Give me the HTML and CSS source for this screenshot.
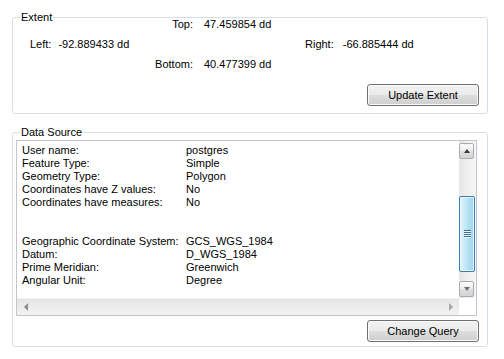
FILE: index.html
```html
<!DOCTYPE html>
<html>
<head>
<meta charset="utf-8">
<link rel="stylesheet" href="styles.css">
</head>
<body>
<div class="dialog">
  <section class="group group-extent">
    <span class="group-title">Extent</span>
    <div class="ext-row ext-center"><span class="ext-lbl">Top:</span><span class="ext-val">47.459854 dd</span></div>
    <div class="ext-row ext-sides">
      <div class="ext-pair ext-left"><span>Left:</span><span class="ext-val">-92.889433 dd</span></div>
      <div class="ext-pair ext-right"><span>Right:</span><span class="ext-val">-66.885444 dd</span></div>
    </div>
    <div class="ext-row ext-center"><span class="ext-lbl">Bottom:</span><span class="ext-val">40.477399 dd</span></div>
    <div class="actions"><button class="btn">Update Extent</button></div>
  </section>

  <section class="group group-source">
    <span class="group-title">Data Source</span>
    <div class="listbox">
      <div class="list-content">
        <div class="row"><span class="k">User name:</span><span>postgres</span></div>
        <div class="row"><span class="k">Feature Type:</span><span>Simple</span></div>
        <div class="row"><span class="k">Geometry Type:</span><span>Polygon</span></div>
        <div class="row"><span class="k">Coordinates have Z values:</span><span>No</span></div>
        <div class="row"><span class="k">Coordinates have measures:</span><span>No</span></div>
        <div class="row"></div>
        <div class="row"></div>
        <div class="row"><span class="k">Geographic Coordinate System:</span><span>GCS_WGS_1984</span></div>
        <div class="row"><span class="k">Datum:</span><span>D_WGS_1984</span></div>
        <div class="row"><span class="k">Prime Meridian:</span><span>Greenwich</span></div>
        <div class="row"><span class="k">Angular Unit:</span><span>Degree</span></div>
      </div>
      <div class="vscroll">
        <div class="sb-btn sb-up"><span class="tri-up"></span></div>
        <div class="sb-thumb"><span class="grip"></span></div>
        <div class="sb-btn sb-down"><span class="tri-down"></span></div>
      </div>
      <div class="hscroll">
        <span class="tri-left"></span>
        <span class="tri-right"></span>
      </div>
      <div class="corner"></div>
    </div>
    <div class="actions actions-source"><button class="btn">Change Query</button></div>
  </section>
</div>
</body>
</html>
```
FILE: styles.css
```css
html, body {
  margin: 0;
  padding: 0;
  background: #ffffff;
}
body {
  font-family: "Liberation Sans", Arial, sans-serif;
  font-size: 11px;
  line-height: 13px;
  color: #000;
}
.dialog {
  padding: 17px 16px 0 12px;
}
.group {
  position: relative;
  border: 1px solid #d5dfe5;
  border-radius: 3px;
}
.group-title {
  position: absolute;
  top: -7px;
  left: 7px;
  padding: 0 1px;
  background: #fff;
  line-height: 13px;
}
.group-extent {
  padding: 0 0 7px 0;
}
.ext-row {
  height: 13px;
  margin-bottom: 7px;
  display: flex;
}
.ext-row:nth-of-type(3) {
  margin-bottom: 0;
}
.ext-center {
  padding-left: 120px;
}
.ext-center .ext-lbl {
  width: 60px;
  text-align: right;
}
.ext-center .ext-val {
  margin-left: 11px;
}
.ext-sides {
  display: grid;
  grid-template-columns: 275px auto;
  padding-left: 17px;
}
.ext-pair {
  display: flex;
}
.ext-left .ext-val {
  margin-left: 7px;
}
.ext-right .ext-val {
  margin-left: 9px;
}
.actions {
  display: flex;
  justify-content: flex-end;
  padding-right: 8px;
  margin-top: 13px;
}
.btn {
  width: 112px;
  height: 22px;
  box-sizing: border-box;
  border: 1px solid #707070;
  border-radius: 3px;
  background: linear-gradient(#f2f2f2 0%, #ebebeb 48%, #dddddd 52%, #cfcfcf 100%);
  box-shadow: inset 0 0 0 1px #fbfbfb;
  font-family: "Liberation Sans", Arial, sans-serif;
  font-size: 11px;
  color: #000;
  padding: 0 0 1px 0;
  margin: 0;
}
.group-source {
  margin-top: 18px;
  padding: 7px 10px 4px 3px;
}
.listbox {
  height: 176px;
  box-sizing: border-box;
  border: 1px solid #c2c6cc;
  display: grid;
  grid-template-columns: 1fr 17px;
  grid-template-rows: 157px 17px;
}
.list-content {
  overflow: hidden;
  padding: 3px 0 0 5px;
}
.row {
  height: 13px;
  display: flex;
  white-space: nowrap;
}
.row .k {
  width: 164px;
  flex: none;
}
.vscroll {
  background: linear-gradient(to right, #e6e6e6, #f1f1f1 60%, #f6f6f6);
  display: flex;
  flex-direction: column;
  align-items: flex-start;
}
.sb-btn {
  width: 15px;
  height: 16px;
  box-sizing: border-box;
  border: 1px solid #a8abb0;
  border-radius: 2px;
  background: linear-gradient(#fdfdfd, #ececec 50%, #dedede 51%, #d4d4d4);
  display: flex;
  align-items: center;
  justify-content: center;
}
.sb-up {
  margin-top: 2px;
}
.sb-down {
  margin-top: 9px;
}
.tri-up {
  width: 0;
  height: 0;
  border-left: 3px solid transparent;
  border-right: 3px solid transparent;
  border-bottom: 4px solid #3a3a3a;
}
.tri-down {
  width: 0;
  height: 0;
  border-left: 3px solid transparent;
  border-right: 3px solid transparent;
  border-top: 4px solid #6e6e6e;
}
.sb-thumb {
  margin-top: 37px;
  width: 16px;
  height: 76px;
  box-sizing: border-box;
  border: 1px solid #3c7fb1;
  border-radius: 2px;
  background: linear-gradient(to right, #e8f6fd, #c5e8f8 40%, #b1dff5 60%, #9fd5f0);
  box-shadow: inset 0 0 0 1px #e6f5fc;
  display: flex;
  align-items: center;
  justify-content: center;
}
.grip {
  width: 7px;
  height: 8px;
  background: repeating-linear-gradient(#3c6f96 0, #3c6f96 1px, #e9f6fc 1px, #e9f6fc 2px);
}
.hscroll {
  background: linear-gradient(#e4e4e4, #ebebeb 40%, #f2f2f2);
  border-top: 1px solid #f2f2f2;
  display: flex;
  align-items: center;
  justify-content: space-between;
  padding: 0 6px 0 7px;
}
.tri-left {
  width: 0;
  height: 0;
  border-top: 4px solid transparent;
  border-bottom: 4px solid transparent;
  border-right: 4px solid #8e8e8e;
}
.tri-right {
  width: 0;
  height: 0;
  border-top: 4px solid transparent;
  border-bottom: 4px solid transparent;
  border-left: 4px solid #a6a6a6;
}
.corner {
  background: #fff;
}
.actions-source {
  margin-top: 4px;
  padding-right: 0;
  margin-right: -2px;
}
```
